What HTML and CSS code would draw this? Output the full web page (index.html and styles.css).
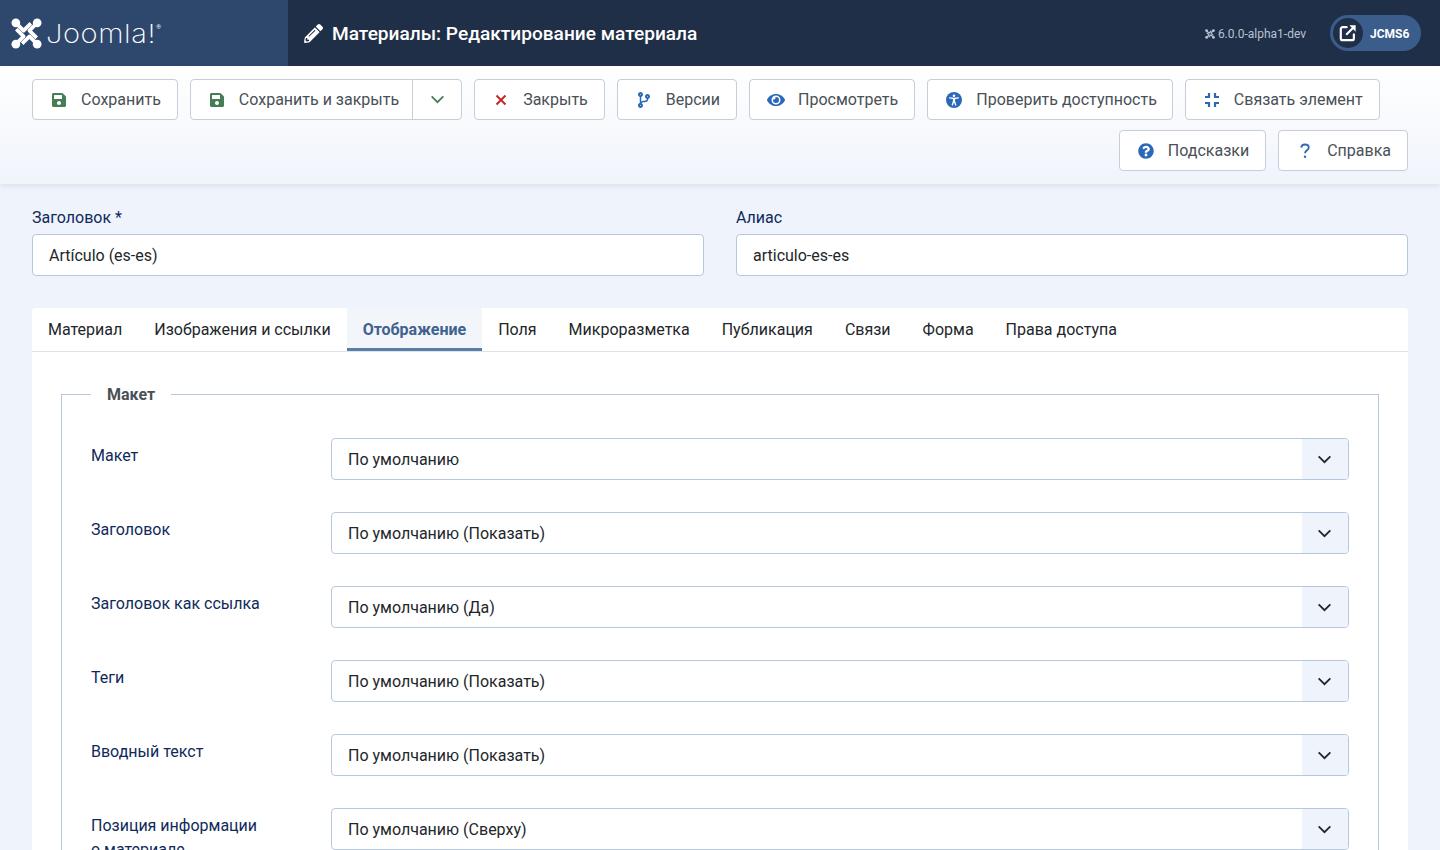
FILE: index.html
```html
<!DOCTYPE html>
<html lang="ru">
<head>
    <meta charset="UTF-8">
    <meta name="viewport" content="width=device-width, initial-scale=1.0">
    <title>Материалы: Редактирование материала</title>
    <link rel="stylesheet" href="styles.css">
</head>
<body>
    <svg class="sprite" aria-hidden="true">
        <symbol id="i-joomla" viewBox="0 0 32 32">
            <g fill="none" stroke="currentColor" stroke-width="3.800" stroke-linejoin="round">
                <path d="M5 5L13 13L20.500 5.500"/>
                <path d="M27 5L19 13L26.500 20.500"/>
                <path d="M27 27L19 19L11.500 26.500"/>
                <path d="M5 27L13 19L5.500 11.500"/>
            </g>
            <circle cx="5" cy="5" r="4.500" fill="currentColor"/>
            <circle cx="27" cy="5" r="4.500" fill="currentColor"/>
            <circle cx="5" cy="27" r="4.500" fill="currentColor"/>
            <circle cx="27" cy="27" r="4.500" fill="currentColor"/>
        </symbol>
        <symbol id="i-save" viewBox="0 0 448 512">
            <path fill="currentColor" d="M433.941 129.941l-83.882-83.882A48 48 0 0 0 316.118 32H48C21.49 32 0 53.49 0 80v352c0 26.51 21.49 48 48 48h352c26.51 0 48-21.49 48-48V163.882a48 48 0 0 0-14.059-33.941zM224 416c-35.346 0-64-28.654-64-64 0-35.346 28.654-64 64-64s64 28.654 64 64c0 35.346-28.654 64-64 64zm96-304.52V212c0 6.627-5.373 12-12 12H76c-6.627 0-12-5.373-12-12V108c0-6.627 5.373-12 12-12h228.52c3.183 0 6.235 1.264 8.485 3.515l3.48 3.48A11.996 11.996 0 0 1 320 111.48z"/>
        </symbol>
        <symbol id="i-chevron" viewBox="0 0 16 10">
            <path d="M1.500 1.500L8 8L14.500 1.500" fill="none" stroke="currentColor" stroke-width="2"/>
        </symbol>
        <symbol id="i-help" viewBox="0 0 512 512">
            <path fill="currentColor" d="M504 256c0 136.997-111.043 248-248 248S8 392.997 8 256C8 119.083 119.043 8 256 8s248 111.083 248 248zM262.655 90c-54.497 0-89.255 22.957-116.549 63.758-3.536 5.286-2.353 12.415 2.715 16.258l34.699 26.31c5.205 3.947 12.621 3.008 16.665-2.122 17.864-22.658 30.113-35.797 57.303-35.797 20.429 0 45.698 13.148 45.698 32.958 0 14.976-12.363 22.667-32.534 33.976C247.128 238.528 216 254.941 216 296v4c0 6.627 5.373 12 12 12h56c6.627 0 12-5.373 12-12v-1.333c0-28.462 83.186-29.647 83.186-106.667 0-58.002-60.165-102-116.531-102zM256 338c-25.365 0-46 20.635-46 46 0 25.364 20.635 46 46 46s46-20.636 46-46c0-25.365-20.635-46-46-46z"/>
        </symbol>
    </svg>

    <!-- Top header -->
    <header class="header">
        <div class="header-logo">
            <svg class="logo-mark"><use href="#i-joomla"/></svg>
            <span class="logo-text">Joomla!</span>
            <span class="logo-reg">®</span>
        </div>
        <div class="header-title">
            <svg class="title-icon" viewBox="0 0 512 512"><path fill="currentColor" d="M497.9 142.1l-46.1 46.1c-4.7 4.7-12.3 4.7-17 0l-111-111c-4.7-4.7-4.7-12.3 0-17l46.1-46.1c18.7-18.7 49.1-18.7 67.9 0l60.1 60.1c18.8 18.7 18.8 49.1 0 67.9zM284.2 99.8L21.6 362.4.4 483.9c-2.9 16.4 11.4 30.6 27.8 27.8l121.5-21.3 262.6-262.6c4.7-4.7 4.7-12.3 0-17l-111-111c-4.8-4.7-12.4-4.7-17.1 0zM124.1 339.9c-5.5-5.5-5.5-14.3 0-19.8l154-154c5.5-5.5 14.3-5.5 19.8 0s5.5 14.3 0 19.8l-154 154c-5.5 5.5-14.3 5.5-19.8 0zM88 424h48v36.3l-64.5 11.3-31.1-31.1L51.7 376H88v48z"/></svg>
            <h1>Материалы: Редактирование материала</h1>
        </div>
        <div class="header-version">
            <svg class="version-icon"><use href="#i-joomla"/></svg>
            <span>6.0.0-alpha1-dev</span>
        </div>
        <a class="site-pill" href="#">
            <span class="site-pill-icon">
                <svg viewBox="0 0 20 20" fill="none" stroke="currentColor" stroke-width="2.400" stroke-linejoin="round">
                    <path d="M8.500 3.500H4A2 2 0 0 0 2 5.500V16A2 2 0 0 0 4 18H14.500A2 2 0 0 0 16.500 16V11.500" stroke-linecap="round"/>
                    <path d="M8 12L15.500 4.500"/>
                    <path d="M11.500 1.500H18.500V8.500Z" fill="currentColor" stroke="none"/>
                </svg>
            </span>
            <span class="site-pill-text">JCMS6</span>
        </a>
    </header>

    <!-- Toolbar -->
    <div class="toolbar">
        <button class="btn">
            <span class="btn-icon icon-green"><svg class="ic-14"><use href="#i-save"/></svg></span>
            Сохранить
        </button>
        <div class="btn-group">
            <button class="btn">
                <span class="btn-icon icon-green"><svg class="ic-14"><use href="#i-save"/></svg></span>
                Сохранить и закрыть
            </button>
            <button class="btn btn-toggle icon-green"><svg class="ic-chevron"><use href="#i-chevron"/></svg></button>
        </div>
        <button class="btn">
            <span class="btn-icon icon-red">
                <svg class="ic-12" viewBox="0 0 12 12"><path d="M1.500 1.500L10.500 10.500M10.500 1.500L1.500 10.500" fill="none" stroke="currentColor" stroke-width="2"/></svg>
            </span>
            Закрыть
        </button>
        <button class="btn">
            <span class="btn-icon icon-blue">
                <svg class="ic-16" viewBox="0 0 384 512"><path fill="currentColor" d="M384 144c0-44.200-35.800-80-80-80s-80 35.800-80 80c0 36.400 24.300 67.100 57.500 76.800-.6 16.100-4.200 28.500-11 36.900-15.400 19.200-49.300 22.400-85.200 25.700-28.200 2.600-57.400 5.400-81.300 16.900v-144c32.500-10.200 56-40.500 56-76.300 0-44.200-35.800-80-80-80S0 35.800 0 80c0 35.800 23.500 66.100 56 76.300v199.300C23.500 365.900 0 396.200 0 432c0 44.200 35.800 80 80 80s80-35.800 80-80c0-34-21.200-63.100-51.200-74.600 3.100-5.200 7.800-9.800 14.900-13.400 16.200-8.200 40.400-10.400 66.100-12.800 42.200-3.900 90-8.400 118.200-43.400 14-17.400 21.100-39.800 21.600-67.900 31.600-10.800 54.400-40.700 54.400-75.900zM80 64c8.800 0 16 7.200 16 16s-7.200 16-16 16-16-7.200-16-16 7.200-16 16-16zm0 384c-8.800 0-16-7.200-16-16s7.200-16 16-16 16 7.200 16 16-7.200 16-16 16zm224-320c8.800 0 16 7.200 16 16s-7.200 16-16 16-16-7.200-16-16 7.200-16 16-16z"/></svg>
            </span>
            Версии
        </button>
        <button class="btn">
            <span class="btn-icon icon-blue">
                <svg class="ic-18" viewBox="0 0 576 512"><path fill="currentColor" d="M572.520 241.400C518.290 135.590 410.930 64 288 64S57.680 135.640 3.480 241.410a32.350 32.350 0 0 0 0 29.190C57.710 376.410 165.070 448 288 448s230.320-71.640 284.520-177.410a32.350 32.350 0 0 0 0-29.190zM288 400a144 144 0 1 1 144-144 143.930 143.930 0 0 1-144 144zm0-240a95.310 95.310 0 0 0-25.310 3.790 47.850 47.850 0 0 1-66.900 66.900A95.780 95.780 0 1 0 288 160z"/></svg>
            </span>
            Просмотреть
        </button>
        <button class="btn btn-a11y">
            <span class="btn-icon icon-blue">
                <svg class="ic-16" viewBox="0 0 16 16">
                    <circle cx="8" cy="8" r="8" fill="currentColor"/>
                    <circle cx="8" cy="3.700" r="1.300" fill="#fff"/>
                    <rect x="6.900" y="6" width="2.200" height="3.800" fill="#fff"/>
                    <path d="M3.600 5.900L8 6.500L12.400 5.900M7.500 9.500L6.300 13M8.500 9.500L9.700 13" fill="none" stroke="#fff" stroke-width="1.300" stroke-linecap="round"/>
                </svg>
            </span>
            Проверить доступность
        </button>
        <button class="btn">
            <span class="btn-icon icon-blue">
                <svg class="ic-16" viewBox="0 0 16 16"><path d="M1 5H5V1M11 1V5H15M15 11H11V15M5 15V11H1" fill="none" stroke="currentColor" stroke-width="2.200"/></svg>
            </span>
            Связать элемент
        </button>
        <button class="btn btn-push">
            <span class="btn-icon icon-blue"><svg class="ic-16"><use href="#i-help"/></svg></span>
            Подсказки
        </button>
        <button class="btn">
            <span class="btn-icon icon-blue">
                <svg class="ic-16" viewBox="0 0 12 16"><path d="M2.200 4.700C2.400 2.700 3.900 1.500 6 1.500C8.100 1.500 9.800 2.700 9.800 4.500C9.800 7.200 6 7.200 6 10.300" fill="none" stroke="currentColor" stroke-width="1.800"/><circle cx="6" cy="13.800" r="1.200" fill="currentColor"/></svg>
            </span>
            Справка
        </button>
    </div>

    <main class="content">
        <!-- Title and alias -->
        <div class="title-row">
            <div class="title-field">
                <label class="field-label" for="jform_title">Заголовок *</label>
                <input class="text-input" id="jform_title" type="text" value="Artículo (es-es)">
            </div>
            <div class="title-field">
                <label class="field-label" for="jform_alias">Алиас</label>
                <input class="text-input" id="jform_alias" type="text" value="articulo-es-es">
            </div>
        </div>

        <!-- Tabs -->
        <div class="tab-card">
            <div class="tabs">
                <a class="tab" href="#">Материал</a>
                <a class="tab" href="#">Изображения и ссылки</a>
                <a class="tab tab-active" href="#">Отображение</a>
                <a class="tab" href="#">Поля</a>
                <a class="tab" href="#">Микроразметка</a>
                <a class="tab" href="#">Публикация</a>
                <a class="tab" href="#">Связи</a>
                <a class="tab" href="#">Форма</a>
                <a class="tab" href="#">Права доступа</a>
            </div>
            <div class="tab-panel">
                <fieldset class="options">
                    <legend>Макет</legend>

                    <div class="option-row">
                        <label class="option-label">Макет</label>
                        <div class="select-wrap">
                            <select class="select"><option>По умолчанию</option></select>
                            <span class="select-arrow"><svg class="ic-chevron"><use href="#i-chevron"/></svg></span>
                        </div>
                    </div>
                    <div class="option-row">
                        <label class="option-label">Заголовок</label>
                        <div class="select-wrap">
                            <select class="select"><option>По умолчанию (Показать)</option></select>
                            <span class="select-arrow"><svg class="ic-chevron"><use href="#i-chevron"/></svg></span>
                        </div>
                    </div>
                    <div class="option-row">
                        <label class="option-label">Заголовок как ссылка</label>
                        <div class="select-wrap">
                            <select class="select"><option>По умолчанию (Да)</option></select>
                            <span class="select-arrow"><svg class="ic-chevron"><use href="#i-chevron"/></svg></span>
                        </div>
                    </div>
                    <div class="option-row">
                        <label class="option-label">Теги</label>
                        <div class="select-wrap">
                            <select class="select"><option>По умолчанию (Показать)</option></select>
                            <span class="select-arrow"><svg class="ic-chevron"><use href="#i-chevron"/></svg></span>
                        </div>
                    </div>
                    <div class="option-row">
                        <label class="option-label">Вводный текст</label>
                        <div class="select-wrap">
                            <select class="select"><option>По умолчанию (Показать)</option></select>
                            <span class="select-arrow"><svg class="ic-chevron"><use href="#i-chevron"/></svg></span>
                        </div>
                    </div>
                    <div class="option-row">
                        <label class="option-label">Позиция информации о материале</label>
                        <div class="select-wrap">
                            <select class="select"><option>По умолчанию (Сверху)</option></select>
                            <span class="select-arrow"><svg class="ic-chevron"><use href="#i-chevron"/></svg></span>
                        </div>
                    </div>
                </fieldset>
            </div>
        </div>
    </main>
</body>
</html>
```

FILE: styles.css
```css
html, body {
    height: 850px;
    overflow: hidden;
}

body {
    margin: 0;
    font-family: Roboto, "Liberation Sans", sans-serif;
    font-size: 16px;
    line-height: 1.5;
    color: #22262a;
    background-color: #eff4fc;
}

.sprite {
    display: none;
}

/* Header */
.header {
    display: flex;
    align-items: center;
    height: 66px;
    padding-right: 19px;
    background-color: #1f2f48;
    color: #fff;
}

.header-logo {
    display: flex;
    align-items: center;
    width: 288px;
    height: 100%;
    padding-left: 11px;
    box-sizing: border-box;
    background-color: #2e486d;
}

.logo-mark {
    width: 31px;
    height: 31px;
    color: #fff;
}

.logo-text {
    margin: 2px 0 0 4px;
    font-family: Inter, sans-serif;
    font-weight: 200;
    font-size: 26px;
    line-height: 1;
    letter-spacing: 0.5px;
    transform: scaleX(1.12);
    transform-origin: left center;
}

.logo-reg {
    align-self: flex-start;
    margin-top: 24px;
    margin-left: 12px;
    font-size: 6px;
    line-height: 1;
}

.header-title {
    display: flex;
    align-items: center;
    flex: 1;
    padding-left: 16px;
}

.title-icon {
    width: 19px;
    height: 19px;
    margin-right: 9px;
}

.header-title h1 {
    margin: 2px 0 0;
    font-size: 19.1px;
    font-weight: 500;
    line-height: 1.2;
}

.header-version {
    display: flex;
    align-items: center;
    margin-top: 1px;
    margin-right: 24px;
    font-size: 12px;
    color: #b9c3d1;
}

.version-icon {
    width: 10px;
    height: 10px;
    margin-right: 3px;
}

.site-pill {
    display: flex;
    align-items: center;
    height: 36px;
    width: 91px;
    box-sizing: border-box;
    padding-left: 3px;
    border-radius: 18px;
    background-color: #3b5d8c;
    color: #fff;
    text-decoration: none;
}

.site-pill-icon {
    display: flex;
    align-items: center;
    justify-content: center;
    width: 30px;
    height: 30px;
    border-radius: 50%;
    background-color: #1f2f48;
}

.site-pill-icon svg {
    width: 18px;
    height: 18px;
}

.site-pill-text {
    margin: 1px 0 0 7px;
    font-size: 12px;
    font-weight: 700;
}

/* Toolbar */
.toolbar {
    position: relative;
    display: flex;
    flex-wrap: wrap;
    gap: 10px 12px;
    padding: 13px 32px;
    background: linear-gradient(180deg, #fff 0%, #f0f4fb 100%);
    box-shadow: 0 2px 6px rgba(60, 80, 120, 0.12);
}

.btn {
    display: flex;
    align-items: center;
    height: 41px;
    padding: 0 16px;
    box-sizing: border-box;
    border: 1px solid #c5ced9;
    border-radius: 4px;
    background-color: #fff;
    color: #495057;
    font-family: inherit;
    font-size: 16px;
    cursor: pointer;
}

.btn-a11y {
    padding-right: 15px;
}

.btn-group {
    display: flex;
}

.btn-group .btn:first-child {
    padding-right: 13px;
    border-radius: 4px 0 0 4px;
}

.btn-group .btn-toggle {
    justify-content: center;
    width: 50px;
    padding: 0;
    margin-left: -1px;
    border-radius: 0 4px 4px 0;
}

.btn-push {
    margin-left: auto;
}

.btn-icon {
    display: flex;
    align-items: center;
    justify-content: center;
    width: 20px;
    margin-right: 12px;
}

.icon-green {
    color: #457d54;
}

.icon-red {
    color: #c52827;
}

.icon-blue {
    color: #2a69b8;
}

.ic-12 {
    width: 12px;
    height: 12px;
}

.ic-14 {
    width: 14px;
    height: 16px;
}

.ic-16 {
    width: 16px;
    height: 16px;
}

.ic-18 {
    width: 18px;
    height: 16px;
}

.ic-chevron {
    width: 15px;
    height: 9px;
}

/* Title and alias */
.content {
    padding: 22px 32px 0;
}

.title-row {
    display: flex;
    gap: 32px;
}

.title-field {
    flex: 1;
}

.field-label {
    display: block;
    margin-bottom: 4px;
    color: #0f2a5a;
}

.text-input {
    display: block;
    width: 100%;
    height: 42px;
    padding: 0 16px;
    box-sizing: border-box;
    border: 1px solid #b6c8e0;
    border-radius: 4px;
    background-color: #fff;
    color: #22262a;
    font-family: inherit;
    font-size: 16px;
}

/* Tabs */
.tab-card {
    margin-top: 32px;
    border-radius: 4px 4px 0 0;
    background-color: #fff;
}

.tabs {
    display: flex;
    height: 43px;
    border-bottom: 1px solid #dfe3e9;
}

.tab {
    display: flex;
    align-items: center;
    padding: 0 16px;
    color: #22262a;
    text-decoration: none;
}

.tab-active {
    background-color: #f2f5fa;
    border-bottom: 3px solid #5b7ea9;
    padding-top: 3px;
    color: #3f618f;
    font-weight: 700;
}

.tab-panel {
    padding: 30px 29px 0;
}

/* Options fieldset */
.options {
    margin: 0;
    padding: 32px 29px 0;
    border: 1px solid #b6c8e0;
}

.options legend {
    padding: 1px 16px 0;
    margin-bottom: -1px;
    font-weight: 700;
    color: #495057;
}

.option-row {
    display: grid;
    grid-template-columns: 240px 1fr;
    align-items: start;
    margin-bottom: 32px;
}

.option-label {
    max-width: 175px;
    padding-top: 6px;
    color: #0f2a5a;
}

.select-wrap {
    position: relative;
}

.select {
    display: block;
    width: 100%;
    height: 42px;
    padding: 0 16px;
    box-sizing: border-box;
    appearance: none;
    border: 1px solid #b6c8e0;
    border-radius: 4px;
    background-color: #fff;
    color: #22262a;
    font-family: inherit;
    font-size: 16px;
}

.select-arrow {
    position: absolute;
    top: 1px;
    right: 1px;
    bottom: 1px;
    display: flex;
    align-items: center;
    justify-content: center;
    width: 46px;
    padding: 1px 1px 0 0;
    box-sizing: border-box;
    border-radius: 0 3px 3px 0;
    background-color: #eff4fc;
    color: #22262a;
    pointer-events: none;
}
```
